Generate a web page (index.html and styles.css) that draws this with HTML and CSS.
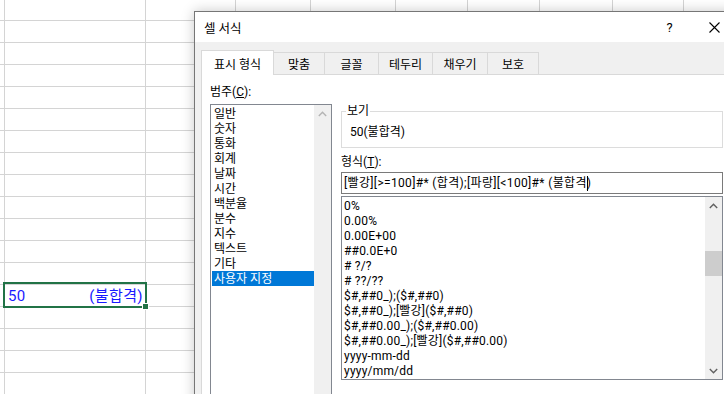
FILE: index.html
```html
<!DOCTYPE html>
<html lang="ko">
<head>
<meta charset="utf-8">
<title>셀 서식</title>
<link rel="stylesheet" href="styles.css">
</head>
<body>
<div class="sheet">
  <div class="row"><div class="c ca"></div><div class="c cb"></div><div class="c cc"></div><div class="c cd"></div><div class="c ce"></div><div class="c cf"></div><div class="c cg"></div><div class="c ch"></div><div class="c ci"></div><div class="c cj"></div></div>
  <div class="row"><div class="c ca"></div><div class="c cb"></div><div class="c cc"></div><div class="c cd"></div><div class="c ce"></div><div class="c cf"></div><div class="c cg"></div><div class="c ch"></div><div class="c ci"></div><div class="c cj"></div></div>
  <div class="row"><div class="c ca"></div><div class="c cb"></div><div class="c cc"></div><div class="c cd"></div><div class="c ce"></div><div class="c cf"></div><div class="c cg"></div><div class="c ch"></div><div class="c ci"></div><div class="c cj"></div></div>
  <div class="row"><div class="c ca"></div><div class="c cb"></div><div class="c cc"></div><div class="c cd"></div><div class="c ce"></div><div class="c cf"></div><div class="c cg"></div><div class="c ch"></div><div class="c ci"></div><div class="c cj"></div></div>
  <div class="row"><div class="c ca"></div><div class="c cb"></div><div class="c cc"></div><div class="c cd"></div><div class="c ce"></div><div class="c cf"></div><div class="c cg"></div><div class="c ch"></div><div class="c ci"></div><div class="c cj"></div></div>
  <div class="row"><div class="c ca"></div><div class="c cb"></div><div class="c cc"></div><div class="c cd"></div><div class="c ce"></div><div class="c cf"></div><div class="c cg"></div><div class="c ch"></div><div class="c ci"></div><div class="c cj"></div></div>
  <div class="row"><div class="c ca"></div><div class="c cb"></div><div class="c cc"></div><div class="c cd"></div><div class="c ce"></div><div class="c cf"></div><div class="c cg"></div><div class="c ch"></div><div class="c ci"></div><div class="c cj"></div></div>
  <div class="row"><div class="c ca"></div><div class="c cb"></div><div class="c cc"></div><div class="c cd"></div><div class="c ce"></div><div class="c cf"></div><div class="c cg"></div><div class="c ch"></div><div class="c ci"></div><div class="c cj"></div></div>
  <div class="row"><div class="c ca"></div><div class="c cb"></div><div class="c cc"></div><div class="c cd"></div><div class="c ce"></div><div class="c cf"></div><div class="c cg"></div><div class="c ch"></div><div class="c ci"></div><div class="c cj"></div></div>
  <div class="row"><div class="c ca"></div><div class="c cb"></div><div class="c cc"></div><div class="c cd"></div><div class="c ce"></div><div class="c cf"></div><div class="c cg"></div><div class="c ch"></div><div class="c ci"></div><div class="c cj"></div></div>
  <div class="row"><div class="c ca"></div><div class="c cb"></div><div class="c cc"></div><div class="c cd"></div><div class="c ce"></div><div class="c cf"></div><div class="c cg"></div><div class="c ch"></div><div class="c ci"></div><div class="c cj"></div></div>
  <div class="row"><div class="c ca"></div><div class="c cb"></div><div class="c cc"></div><div class="c cd"></div><div class="c ce"></div><div class="c cf"></div><div class="c cg"></div><div class="c ch"></div><div class="c ci"></div><div class="c cj"></div></div>
  <div class="row"><div class="c ca"></div><div class="c cb"></div><div class="c cc"></div><div class="c cd"></div><div class="c ce"></div><div class="c cf"></div><div class="c cg"></div><div class="c ch"></div><div class="c ci"></div><div class="c cj"></div></div>
  <div class="row"><div class="c ca"></div><div class="c cb value"><span>50</span><span>(불합격)</span></div><div class="c cc"></div><div class="c cd"></div><div class="c ce"></div><div class="c cf"></div><div class="c cg"></div><div class="c ch"></div><div class="c ci"></div><div class="c cj"></div></div>
  <div class="row"><div class="c ca"></div><div class="c cb"></div><div class="c cc"></div><div class="c cd"></div><div class="c ce"></div><div class="c cf"></div><div class="c cg"></div><div class="c ch"></div><div class="c ci"></div><div class="c cj"></div></div>
  <div class="row"><div class="c ca"></div><div class="c cb"></div><div class="c cc"></div><div class="c cd"></div><div class="c ce"></div><div class="c cf"></div><div class="c cg"></div><div class="c ch"></div><div class="c ci"></div><div class="c cj"></div></div>
  <div class="row"><div class="c ca"></div><div class="c cb"></div><div class="c cc"></div><div class="c cd"></div><div class="c ce"></div><div class="c cf"></div><div class="c cg"></div><div class="c ch"></div><div class="c ci"></div><div class="c cj"></div></div>
  <div class="row"><div class="c ca"></div><div class="c cb"></div><div class="c cc"></div><div class="c cd"></div><div class="c ce"></div><div class="c cf"></div><div class="c cg"></div><div class="c ch"></div><div class="c ci"></div><div class="c cj"></div></div>
</div>

<div class="selection"><div class="handle"></div></div>

<div class="dialog">
  <div class="titlebar">
    <span class="title">셀 서식</span>
    <span class="tb-btn">?</span>
    <span class="tb-btn"><svg width="11" height="11" viewBox="0 0 11 11"><path d="M0.5 0.5 L10.5 10.5 M10.5 0.5 L0.5 10.5" stroke="#000" stroke-width="1.1" fill="none"/></svg></span>
  </div>
  <div class="body">
    <div class="tabs">
      <div class="tab active t1">표시 형식</div>
      <div class="tab t2">맞춤</div>
      <div class="tab t3">글꼴</div>
      <div class="tab t4">테두리</div>
      <div class="tab t5">채우기</div>
      <div class="tab t6">보호</div>
    </div>
    <div class="panel">
      <div class="col-left">
        <div class="label">범주(<u>C</u>):</div>
        <div class="listbox cat">
          <div class="items">
            <div class="item">일반</div>
            <div class="item">숫자</div>
            <div class="item">통화</div>
            <div class="item">회계</div>
            <div class="item">날짜</div>
            <div class="item">시간</div>
            <div class="item">백분율</div>
            <div class="item">분수</div>
            <div class="item">지수</div>
            <div class="item">텍스트</div>
            <div class="item">기타</div>
            <div class="item selected">사용자 지정</div>
          </div>
          <div class="vscroll">
            <div class="arrow"><svg width="9" height="6" viewBox="0 0 9 6"><path d="M0.8 5 L4.5 1.3 L8.2 5" stroke="#b4b4b4" stroke-width="1.4" fill="none"/></svg></div>
          </div>
        </div>
      </div>
      <div class="col-right">
        <fieldset class="sample">
          <legend>보기</legend>
          <div class="sample-text">50(불합격)</div>
        </fieldset>
        <div class="label fmt-label">형식(<u>T</u>):</div>
        <div class="input">[빨강][&gt;=100]#* (합격);[파랑][&lt;100]#* (불합격<span class="caret"></span>)</div>
        <div class="listbox fmt">
          <div class="items">
            <div class="item">0%</div>
            <div class="item">0.00%</div>
            <div class="item">0.00E+00</div>
            <div class="item">##0.0E+0</div>
            <div class="item"># ?/?</div>
            <div class="item"># ??/??</div>
            <div class="item">$#,##0_);($#,##0)</div>
            <div class="item">$#,##0_);[빨강]($#,##0)</div>
            <div class="item">$#,##0.00_);($#,##0.00)</div>
            <div class="item">$#,##0.00_);[빨강]($#,##0.00)</div>
            <div class="item">yyyy-mm-dd</div>
            <div class="item">yyyy/mm/dd</div>
          </div>
          <div class="vscroll">
            <div class="arrow"><svg width="9" height="6" viewBox="0 0 9 6"><path d="M0.8 5 L4.5 1.3 L8.2 5" stroke="#606060" stroke-width="1.4" fill="none"/></svg></div>
            <div class="thumb"></div>
            <div class="track"></div>
            <div class="arrow"><svg width="9" height="6" viewBox="0 0 9 6"><path d="M0.8 1 L4.5 4.7 L8.2 1" stroke="#606060" stroke-width="1.4" fill="none"/></svg></div>
          </div>
        </div>
      </div>
    </div>
  </div>
</div>
</body>
</html>
```

FILE: styles.css
```css
* { box-sizing: border-box; }
html, body { margin: 0; padding: 0; }
body {
  width: 724px;
  height: 394px;
  overflow: hidden;
  position: relative;
  background: #fff;
  font-family: Roboto, "Noto Sans CJK KR", sans-serif;
  color: #000;
}

/* spreadsheet grid */
.sheet { margin-top: -1px; }
.row { display: flex; height: 22px; border-bottom: 1px solid #d4d4d4; }
.c { flex: none; height: 100%; border-right: 1px solid #d4d4d4; }
.ca { width: 5px; }
.cb { width: 141px; }
.cc { width: 90px; }
.cd { width: 75px; }
.ce { width: 85px; }
.cf { width: 72px; }
.cg { width: 72px; }
.ch { width: 73px; }
.ci { width: 71px; }
.cj { width: 76px; }
.value {
  display: flex;
  justify-content: space-between;
  align-items: center;
  padding: 0 2px 0 3px;
  font-size: 15px;
  line-height: 20px;
  color: #1a1aff;
  letter-spacing: 0.4px;
}

.selection {
  position: absolute;
  left: 3px;
  top: 282px;
  width: 144px;
  height: 26px;
  border: 2px solid #217346;
}
.handle {
  position: absolute;
  right: -4px;
  bottom: -4px;
  width: 7px;
  height: 7px;
  background: #217346;
  border: 1px solid #fff;
}

/* dialog */
.dialog {
  position: absolute;
  left: 194px;
  top: 11px;
  width: 544px;
  height: 400px;
  background: #fff;
  border: 1px solid #767676;
  box-shadow: 0 0 12px rgba(0, 0, 0, 0.22);
  font-size: 12px;
  display: flex;
  flex-direction: column;
}
.titlebar {
  height: 30px;
  display: flex;
  align-items: center;
  padding-left: 9px;
  background: #fff;
  flex: none;
}
.title { flex: 1; font-size: 12.5px; }
.tb-btn {
  width: 45px;
  height: 30px;
  display: flex;
  align-items: center;
  justify-content: center;
  font-size: 13px;
}
.body {
  flex: 1;
  background: #f0f0f0;
  padding: 0 6px;
  display: flex;
  flex-direction: column;
}
.tabs {
  height: 32px;
  display: flex;
  align-items: flex-end;
  flex: none;
  position: relative;
  z-index: 1;
}
.tab {
  height: 22px;
  border: 1px solid #d9d9d9;
  border-bottom: none;
  background: #f0f0f0;
  display: flex;
  align-items: center;
  justify-content: center;
  margin-left: -1px;
  font-size: 12px;
}
.tab.active {
  height: 25px;
  margin-bottom: -1px;
  background: #fff;
  margin-left: 0;
  position: relative;
  z-index: 2;
}
.t1 { width: 73px; }
.t2 { width: 52px; }
.t3 { width: 55px; }
.t4 { width: 55px; }
.t5 { width: 56px; }
.t6 { width: 52px; }

.panel {
  flex: 1;
  background: #fff;
  border: 1px solid #d9d9d9;
  padding: 10px 0 0 8px;
  display: flex;
  gap: 9px;
}
.col-left { width: 122px; flex: none; }
.col-right { width: 382px; flex: none; }
.label { height: 15px; line-height: 15px; }
u { text-decoration: underline; text-underline-offset: 1px; }

.listbox {
  border: 1px solid #828790;
  background: #fff;
  display: flex;
}
.cat { margin-top: 4px; height: 300px; }
.items { flex: 1; padding: 1px 0 0 1px; }
.item { height: 15px; line-height: 16px; padding-left: 2px; white-space: nowrap; }
.fmt .item { padding-left: 1px; letter-spacing: 0.2px; }
.item.selected { background: #0078d7; color: #fff; }
.vscroll {
  width: 17px;
  flex: none;
  background: #f0f0f0;
  display: flex;
  flex-direction: column;
}
.arrow {
  height: 17px;
  flex: none;
  display: flex;
  align-items: center;
  justify-content: center;
}
.thumb {
  height: 25px;
  margin-top: 37px;
  background: #cdcdcd;
  flex: none;
}
.track { flex: 1; }

.sample {
  margin: 18px 0 0 0;
  padding: 6px 8px 7px 8px;
  border: 1px solid #dcdcdc;
  min-inline-size: 0;
}
.sample legend {
  margin-left: -4px;
  padding: 0 1px;
  line-height: 16px;
}
.sample-text { line-height: 15px; height: 15px; }
.fmt-label { margin-top: 7px; }
.input {
  margin-top: 2px;
  height: 22px;
  border: 1px solid #7a7a7a;
  padding-left: 2px;
  line-height: 20px;
  white-space: nowrap;
  letter-spacing: 0.35px;
}
.caret {
  display: inline-block;
  width: 1px;
  height: 15px;
  background: #000;
  vertical-align: middle;
  margin-right: -1px;
}
.fmt { margin-top: 2px; height: 184px; }
```
